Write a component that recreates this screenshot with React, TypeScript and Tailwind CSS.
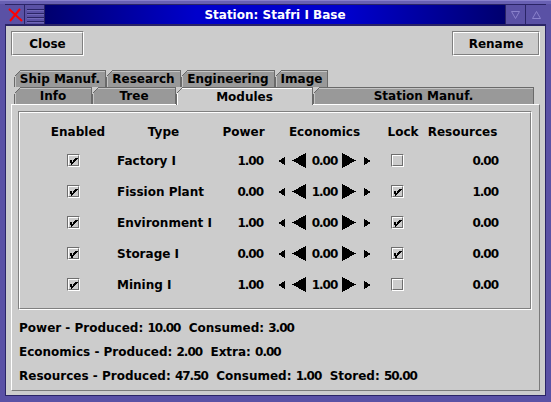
import React from "react";

function Etched({ outer, inner, children }: { outer: string; inner: string; children?: React.ReactNode }) {
  return (
    <div className={`border-t border-l border-t-[#808080] border-l-[#808080] border-b border-r border-b-white border-r-white ${outer}`}>
      <div className={`w-full h-full border-t border-l border-t-white border-l-white border-b border-r border-b-[#808080] border-r-[#808080] ${inner}`}>
        {children}
      </div>
    </div>
  );
}

function CheckBox({ checked }: { checked: boolean }) {
  return (
    <div className="w-[13px] h-[13px] border-t border-l border-t-[#6e6e6e] border-l-[#6e6e6e] border-b border-r border-b-white border-r-white">
      <div className="w-full h-full border-t border-l border-t-white border-l-white border-b border-r border-b-[#6e6e6e] border-r-[#6e6e6e] flex items-center justify-center">
        {checked && (
          <svg width="9" height="9" viewBox="0 0 9 9" shapeRendering="crispEdges">
            <path d="M1.5 4 L2.8 7.8 L8 2" stroke="black" strokeWidth="2" fill="none" />
          </svg>
        )}
      </div>
    </div>
  );
}

function TabCorner() {
  return (
    <svg className="absolute -top-px -left-px" width="8" height="8" viewBox="0 0 8 8" shapeRendering="crispEdges">
      <polygon points="0,0 7,0 0,7" fill="#cccccc" />
      <line x1="0.5" y1="6.5" x2="6.5" y2="0.5" stroke="#6a6a6a" strokeWidth="1" />
    </svg>
  );
}

function Tab({ label, cls, selected }: { label: string; cls: string; selected?: boolean }) {
  return (
    <div
      className={`relative flex items-center justify-center border-t border-l border-r border-[#6a6a6a] ${
        selected ? "bg-[#cccccc] h-[18px] z-10" : "bg-[#999999] h-[17px]"
      } ${cls}`}
    >
      <div className={`absolute inset-0 border-t border-l ${selected ? "border-white" : "border-[#c4c4c4]"}`} />
      <TabCorner />
      <span className="relative">{label}</span>
    </div>
  );
}

function SmallLeft() {
  return (
    <svg width="7" height="8" viewBox="0 0 7 8" shapeRendering="crispEdges">
      <polygon points="7,0 0,4 7,8" fill="black" />
    </svg>
  );
}
function SmallRight() {
  return (
    <svg width="7" height="8" viewBox="0 0 7 8" shapeRendering="crispEdges">
      <polygon points="0,0 7,4 0,8" fill="black" />
    </svg>
  );
}
function BigLeft() {
  return (
    <svg width="14" height="15" viewBox="0 0 14 15" shapeRendering="crispEdges">
      <polygon points="14,0 0,7.5 14,15" fill="black" />
    </svg>
  );
}
function BigRight() {
  return (
    <svg width="14" height="15" viewBox="0 0 14 15" shapeRendering="crispEdges">
      <polygon points="0,0 14,7.5 0,15" fill="black" />
    </svg>
  );
}

const rows = [
  { en: true, type: "Factory I", power: "1.00", eco: "0.00", lock: false, res: "0.00" },
  { en: true, type: "Fission Plant", power: "0.00", eco: "1.00", lock: true, res: "1.00" },
  { en: true, type: "Environment I", power: "1.00", eco: "0.00", lock: true, res: "0.00" },
  { en: true, type: "Storage I", power: "0.00", eco: "0.00", lock: true, res: "0.00" },
  { en: true, type: "Mining I", power: "1.00", eco: "1.00", lock: false, res: "0.00" },
];

const GRID = "grid grid-cols-[62px_109px_51px_111px_46px_73px]";

function N({ children }: { children: React.ReactNode }) {
  return <span className="tracking-[-1px]">{children}</span>;
}

export default function App() {
  return (
    <div className="relative w-[551px] h-[402px] bg-[#5a51a5] flex flex-col px-[5px] pb-[6px] font-['DejaVu_Sans',sans-serif] font-bold text-[12px] leading-none text-black overflow-hidden">
      {/* top band */}
      <div className="h-[4px] -mx-[5px] bg-[#6860b3] border-t border-[#8880cc]" />
      {/* title bar */}
      <div className="flex h-[22px] border-t border-b-2 border-[#2a2466]">
        <div className="w-[20px] h-full border-r border-[#2a2466] bg-[#5a51a5] flex items-center justify-center">
          <svg width="16" height="14" viewBox="0 0 16 14">
            <line x1="2" y1="1" x2="15" y2="13" stroke="#ff0000" strokeWidth="2" />
            <line x1="13" y1="1" x2="3" y2="13" stroke="#ff0000" strokeWidth="2" />
          </svg>
        </div>
        <div className="w-[20px] h-full border-r border-[#2a2466] bg-[#5a51a5] flex items-center justify-center">
          <svg width="18" height="16" viewBox="0 0 18 16" shapeRendering="crispEdges">
            {[2, 6, 10, 14].map((y) => (
              <g key={y}>
                <line x1="1" y1={y + 0.5} x2="18" y2={y + 0.5} stroke="#2a2466" strokeWidth="1" />
                <line x1="1" y1={y + 1.5} x2="18" y2={y + 1.5} stroke="#7068b8" strokeWidth="1" />
              </g>
            ))}
          </svg>
        </div>
        <div className="flex-1 h-full bg-[linear-gradient(90deg,#00006e,#0000cc_33%,#0000cc_66%,#00006e)] flex items-center justify-center text-white">
          Station: Stafri I Base
        </div>
        <div className="w-[20px] h-full border-l border-[#2a2466] bg-[#5a51a5] flex items-center justify-center">
          <svg width="9" height="8" viewBox="0 0 9 8">
            <polygon points="0.5,0.5 8.5,0.5 4.5,7.5" fill="none" stroke="#8a82cc" strokeWidth="1" />
          </svg>
        </div>
        <div className="w-[21px] h-full border-l border-[#2a2466] bg-[#5a51a5] flex items-center justify-center">
          <svg width="9" height="8" viewBox="0 0 9 8">
            <polygon points="0.5,7.5 8.5,7.5 4.5,0.5" fill="none" stroke="#8a82cc" strokeWidth="1" />
          </svg>
        </div>
      </div>

      {/* content */}
      <div className="flex-1 bg-[#cccccc] border-l border-r border-b border-[#2a2466] flex flex-col px-[5px] pt-[5px]">
        {/* buttons */}
        <div className="flex justify-between">
          <Etched outer="w-[73px] h-[25px]" inner="flex items-center justify-center">
            Close
          </Etched>
          <Etched outer="w-[88px] h-[25px]" inner="flex items-center justify-center">
            Rename
          </Etched>
        </div>

        {/* tabs */}
        <div className="mt-[14px] pl-[3px] flex flex-col">
          <div className="flex items-start h-[17px]">
            <Tab label="Ship Manuf." cls="w-[92px]" />
            <Tab label="Research" cls="w-[75px]" />
            <Tab label="Engineering" cls="w-[94px]" />
            <Tab label="Image" cls="w-[53px]" />
          </div>
          <div className="flex items-start h-[17px]">
            <Tab label="Info" cls="w-[78px]" />
            <Tab label="Tree" cls="w-[84px]" />
            <Tab label="Modules" cls="w-[137px]" selected />
            <Tab label="Station Manuf." cls="w-[221px]" />
          </div>
        </div>

        {/* panel */}
        <div className="w-[529px] h-[287px] border-t border-l border-white border-b border-r border-b-[#7a7a7a] border-r-[#7a7a7a] flex flex-col">
          <div className="ml-[6px] mt-[6px]">
            <Etched outer="w-[514px] h-[199px]" inner="pt-[6px] pl-[27px]">
              <div className={`${GRID} h-[26px] items-center`}>
                <div className="text-center">Enabled</div>
                <div className="text-center">Type</div>
                <div className="text-center">Power</div>
                <div className="text-center">Economics</div>
                <div className="text-center">Lock</div>
                <div className="text-center">Resources</div>
              </div>
              {rows.map((r, i) => (
                <div key={i} className={`${GRID} h-[31px] items-center`}>
                  <div className="flex justify-center pr-[9px]">
                    <CheckBox checked={r.en} />
                  </div>
                  <div className="pl-[8px]">{r.type}</div>
                  <div className="text-right pr-[6px] tracking-[-1px]">{r.power}</div>
                  <div className="flex items-center justify-center">
                    <SmallLeft />
                    <div className="ml-[7px]">
                      <BigLeft />
                    </div>
                    <span className="ml-[6px] tracking-[-1px]">{r.eco}</span>
                    <div className="ml-[5px]">
                      <BigRight />
                    </div>
                    <div className="ml-[8px]">
                      <SmallRight />
                    </div>
                  </div>
                  <div className="flex justify-center pr-[12px]">
                    <CheckBox checked={r.lock} />
                  </div>
                  <div className="text-right pr-[1px] tracking-[-1px]">{r.res}</div>
                </div>
              ))}
            </Etched>
          </div>
          <div className="mt-[6px] pl-[7px] flex flex-col">
            <div className="h-[24px] flex items-center whitespace-pre">
              Power - Produced: <N>10.00</N>  Consumed: <N>3.00</N>
            </div>
            <div className="h-[24px] flex items-center whitespace-pre">
              Economics - Produced: <N>2.00</N>  Extra: <N>0.00</N>
            </div>
            <div className="h-[24px] flex items-center whitespace-pre">
              Resources - Produced: <N>47.50</N>  Consumed: <N>1.00</N>  Stored: <N>50.00</N>
            </div>
          </div>
        </div>
      </div>
    </div>
  );
}
